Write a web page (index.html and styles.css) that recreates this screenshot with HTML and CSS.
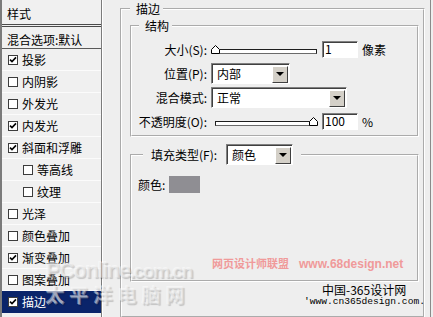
FILE: index.html
```html
<!DOCTYPE html>
<html lang="zh-CN">
<head>
    <meta charset="UTF-8">
    <title>图层样式 - 描边</title>
    <link rel="stylesheet" href="styles.css">
</head>
<body>
    <div class="dialog">
        <aside class="style-list">
            <div class="list-head">样式</div>
            <div class="list-blend">混合选项:默认</div>
            <ul class="effects">
                <li class="effect"><span class="check"><svg viewBox="0 0 8 8"><path d="M1 3.6l2 2L7 1.4"/></svg></span>投影</li>
                <li class="effect"><span class="check"></span>内阴影</li>
                <li class="effect"><span class="check"></span>外发光</li>
                <li class="effect"><span class="check"><svg viewBox="0 0 8 8"><path d="M1 3.6l2 2L7 1.4"/></svg></span>内发光</li>
                <li class="effect"><span class="check"><svg viewBox="0 0 8 8"><path d="M1 3.6l2 2L7 1.4"/></svg></span>斜面和浮雕</li>
                <li class="effect sub"><span class="check"></span>等高线</li>
                <li class="effect sub"><span class="check"></span>纹理</li>
                <li class="effect"><span class="check"></span>光泽</li>
                <li class="effect"><span class="check"></span>颜色叠加</li>
                <li class="effect"><span class="check"><svg viewBox="0 0 8 8"><path d="M1 3.6l2 2L7 1.4"/></svg></span>渐变叠加</li>
                <li class="effect"><span class="check"></span>图案叠加</li>
                <li class="effect selected"><span class="check"><svg viewBox="0 0 8 8"><path d="M1 3.6l2 2L7 1.4"/></svg></span>描边</li>
            </ul>
        </aside>

        <section class="settings">
            <fieldset class="group stroke">
                <legend>描边</legend>

                <fieldset class="group structure">
                    <legend>结构</legend>
                    <div class="rows">
                        <div class="row">
                            <span class="label">大小(S):</span>
                            <div class="slider">
                                <span class="track"></span>
                                <svg class="thumb" style="left: 0px" viewBox="0 0 9 9"><path d="M0.5 8.5V4.5L4.5 0.5L8.5 4.5V8.5Z"/></svg>
                            </div>
                            <span class="field">1</span>
                            <span class="unit">像素</span>
                        </div>
                        <div class="row">
                            <span class="label">位置(P):</span>
                            <div class="select select-position">内部<span class="arrow"></span></div>
                        </div>
                        <div class="row">
                            <span class="label">混合模式:</span>
                            <div class="select select-mode">正常<span class="arrow"></span></div>
                        </div>
                        <div class="row">
                            <span class="label">不透明度(O):</span>
                            <div class="slider">
                                <span class="track"></span>
                                <svg class="thumb" style="left: 98px" viewBox="0 0 9 9"><path d="M0.5 8.5V4.5L4.5 0.5L8.5 4.5V8.5Z"/></svg>
                            </div>
                            <span class="field">100</span>
                            <span class="unit">%</span>
                        </div>
                    </div>
                </fieldset>

                <fieldset class="group fill">
                    <legend>
                        <span class="legend-row">
                            <span>填充类型(F):</span>
                            <span class="select select-fill">颜色<span class="arrow"></span></span>
                        </span>
                    </legend>
                    <div class="fill-body">
                        <div class="color-row">
                            <span>颜色:</span>
                            <span class="swatch"></span>
                        </div>
                    </div>
                </fieldset>
            </fieldset>
        </section>
    </div>

    <div class="watermarks" aria-hidden="true">
        <div class="wm-pconline">PConline<span>.com.cn</span></div>
        <div class="wm-pconline-cn">太平洋电脑网</div>
        <div class="wm-68">网页设计师联盟<b>www.68design.net</b></div>
        <div class="wm-365">中国-365设计网</div>
        <div class="wm-365-url">'www.cn365design.com.</div>
    </div>
</body>
</html>
```

FILE: styles.css
```css
* {
    box-sizing: border-box;
}
body {
    margin: 0;
    width: 433px;
    height: 317px;
    overflow: hidden;
    position: relative;
    background: #eeeeee;
    color: #000;
    font-family: "Noto Sans CJK SC", "Liberation Sans", sans-serif;
    font-size: 12px;
    line-height: 16px;
}
.dialog {
    display: flex;
    height: 317px;
}

/* left list of effects */
.style-list {
    flex: none;
    width: 102px;
    border-left: 2px solid #7b7b7b;
    border-right: 1px solid #7b7b7b;
    box-shadow: 1px 0 0 #fff;
    background: #f0f0f0;
}
.list-head {
    height: 27px;
    padding: 6px 0 0 5px;
    border-bottom: 3px double #4a4a4a;
}
.list-blend {
    height: 22px;
    padding: 5px 0 0 5px;
    border-bottom: 1px solid #5a5a5a;
}
.effects {
    list-style: none;
    margin: 0;
    padding: 0;
}
.effect {
    display: flex;
    align-items: center;
    height: 22px;
    padding-left: 6px;
    border-bottom: 1px solid #fbfbfb;
}
.effect.sub {
    padding-left: 21px;
}
.effect.selected {
    background: #0a246a;
    color: #fff;
    border-bottom-color: #0a246a;
}
.check {
    display: grid;
    place-items: center;
    width: 10px;
    height: 10px;
    margin-right: 4px;
    border: 1px solid #3c3c3c;
    background: #fff;
}
.check svg {
    width: 8px;
    height: 8px;
    fill: none;
    stroke: #000;
    stroke-width: 1.6;
}

/* right settings */
.settings {
    flex: none;
    width: 329px;
    padding: 1px 0 0 18px;
    border-right: 1px solid #8a8a8a;
}
.group {
    margin: 0;
    border: 2px groove #fff;
}
.group legend {
    padding: 0 3px 0 6px;
    line-height: 16px;
}
.stroke {
    width: 305px;
    padding: 0 4px 34px 8px;
}
.structure {
    margin-top: 1px;
    padding: 4px 2px 2px 6px;
}
.structure legend {
    margin-left: 1px;
}
.rows {
    display: flex;
    flex-direction: column;
    gap: 1px;
}
.row {
    display: flex;
    align-items: center;
    height: 23px;
}
.label {
    width: 69px;
    margin-right: 4px;
    text-align: right;
    white-space: nowrap;
}
.slider {
    position: relative;
    width: 107px;
    height: 10px;
    margin-right: 4px;
}
.track {
    position: absolute;
    left: 4px;
    right: 1px;
    top: 4px;
    height: 5px;
    border: 1px solid #1e1e1e;
    border-bottom-color: #6a6a6a;
    background: #fff;
}
.thumb {
    position: absolute;
    top: 0;
    width: 9px;
    height: 9px;
    fill: #fff;
    stroke: #000;
    stroke-width: 1;
}
.field {
    width: 36px;
    height: 17px;
    margin-right: 4px;
    padding-left: 2px;
    line-height: 14px;
    background: #fff;
    border: 1px solid;
    border-color: #808080 #fff #fff #808080;
    box-shadow: inset 1px 1px 0 #404040;
}
.select {
    display: flex;
    align-items: center;
    height: 21px;
    padding-left: 5px;
    background: #fff;
    border: 1px solid;
    border-color: #808080 #fff #fff #808080;
    box-shadow: inset 1px 1px 0 #404040;
}
.select-position {
    width: 79px;
}
.select-mode {
    width: 136px;
}
.select-fill {
    width: 67px;
}
.arrow {
    display: grid;
    place-items: center;
    width: 16px;
    height: 17px;
    margin: 1px 1px 0 auto;
    background: #d4d0c8;
    border: 1px solid;
    border-color: #fff #404040 #404040 #fff;
}
.arrow::before {
    content: "";
    border-left: 4px solid transparent;
    border-right: 4px solid transparent;
    border-top: 4px solid #000;
}
.fill {
    margin-top: 7px;
    padding: 0 2px 0 6px;
}
.fill legend {
    margin-left: 5px;
    padding: 0 8px;
}
.legend-row {
    display: flex;
    align-items: center;
    gap: 9px;
}
.fill-body {
    height: 115px;
    padding-top: 11px;
}
.color-row {
    display: flex;
    align-items: center;
    gap: 4px;
    height: 17px;
}
.swatch {
    width: 31px;
    height: 17px;
    background: #8f8e93;
}

/* watermarks over the capture */
.watermarks {
    position: absolute;
    inset: 0;
    pointer-events: none;
}
.wm-pconline,
.wm-pconline-cn {
    position: absolute;
    left: 46px;
    color: rgba(235, 235, 235, 0.4);
    text-shadow: -1px -1px 0 rgba(255, 255, 255, 0.45), 1px 1px 1px rgba(0, 0, 0, 0.18);
    font-weight: bold;
}
.wm-pconline {
    top: 258px;
    font-family: "Liberation Sans", sans-serif;
    font-size: 22px;
    line-height: 26px;
    letter-spacing: -1.4px;
}
.wm-pconline span {
    font-size: 19px;
}
.wm-pconline-cn {
    top: 284px;
    font-size: 19px;
    line-height: 22px;
    letter-spacing: 5px;
}
.wm-68 {
    position: absolute;
    left: 212px;
    top: 255px;
    color: #f09a9a;
    font-size: 11px;
    font-weight: bold;
}
.wm-68 b {
    margin-left: 10px;
    font-family: "Liberation Sans", sans-serif;
    font-size: 12px;
}
.wm-365 {
    position: absolute;
    left: 322px;
    top: 282px;
    font-size: 12px;
}
.wm-365-url {
    position: absolute;
    left: 304px;
    top: 296px;
    font-family: "Liberation Mono", monospace;
    font-size: 9.6px;
    line-height: 12px;
}
```
